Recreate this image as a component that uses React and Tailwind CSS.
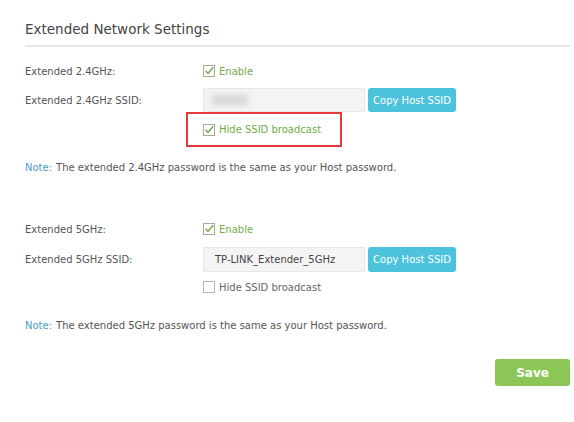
import React from 'react';

const font = { fontFamily: '"DejaVu Sans", Verdana, sans-serif' };

function Check({ checked }) {
  return (
    <svg width="12" height="12" viewBox="0 0 12 12" className="shrink-0">
      <rect x="0.5" y="0.5" width="11" height="11" fill="#fff" stroke={checked ? '#9fae94' : '#b5b5b5'} />
      {checked && <path d="M2.6 5.8 L5 8.4 L10.2 2.2" fill="none" stroke="#6fa84a" strokeWidth="1.4" />}
    </svg>
  );
}

function CheckRow({ checked, label }) {
  return (
    <div className="flex items-center gap-[4px]">
      <Check checked={checked} />
      <span className={checked ? 'text-[#72ac46]' : 'text-[#666]'}>{label}</span>
    </div>
  );
}

function Row({ label, children, className }) {
  return (
    <div className={'flex items-center ' + className}>
      <div className="w-[178px] shrink-0 text-[#555]">{label}</div>
      {children}
    </div>
  );
}

function SsidField({ value, blurred }) {
  return (
    <div className="flex h-full">
      <div className="w-[162px] h-full bg-[#f4f4f4] border border-[#e8e8e8] flex items-center pl-[8px] text-[#444]">
        {blurred ? <span className="w-[36px] h-[10px] bg-[#d6d6d6] blur-[3px]" /> : <span className="pl-[3px]">{value}</span>}
      </div>
      <button className="ml-[3px] w-[88px] h-full bg-[#4dc2dc] text-white rounded-[3px] text-[10px]">Copy Host SSID</button>
    </div>
  );
}

function Note({ children, className }) {
  return (
    <div className={'h-[16px] flex items-center text-[#555] ' + className}>
      <span className="text-[#4a9cc6]">Note:</span>
      <span className="ml-[4px]">{children}</span>
    </div>
  );
}

export default function App() {
  return (
    <div className="w-[574px] h-[422px] bg-white pl-[25px] pr-[4px] text-[10px]" style={font}>
      <div className="pt-[21px] pb-[7px] text-[13.5px] leading-[17px] text-[#444] border-b-2 border-[#e6e6e6]">
        Extended Network Settings
      </div>

      <Row label="Extended 2.4GHz:" className="h-[20px] mt-[14px]">
        <CheckRow checked label="Enable" />
      </Row>
      <Row label="Extended 2.4GHz SSID:" className="h-[24px] mt-[7px]">
        <SsidField blurred />
      </Row>
      <div className="ml-[161px] w-[156px] h-[35px] border-2 border-[#e23b3b] flex items-center pl-[15px]">
        <CheckRow checked label="Hide SSID broadcast" />
      </div>
      <Note className="mt-[12px]">The extended 2.4GHz password is the same as your Host password.</Note>

      <Row label="Extended 5GHz:" className="h-[20px] mt-[44px]">
        <CheckRow checked label="Enable" />
      </Row>
      <Row label="Extended 5GHz SSID:" className="h-[25px] mt-[8px]">
        <SsidField value="TP-LINK_Extender_5GHz" />
      </Row>
      <div className="h-[20px] mt-[5px] ml-[178px] flex items-center">
        <CheckRow label="Hide SSID broadcast" />
      </div>
      <Note className="mt-[20px]">The extended 5GHz password is the same as your Host password.</Note>

      <div className="flex justify-end mt-[26px]">
        <button className="w-[75px] h-[27px] bg-[#8cc657] text-white font-bold text-[12px] rounded-[3px]">Save</button>
      </div>
    </div>
  );
}
